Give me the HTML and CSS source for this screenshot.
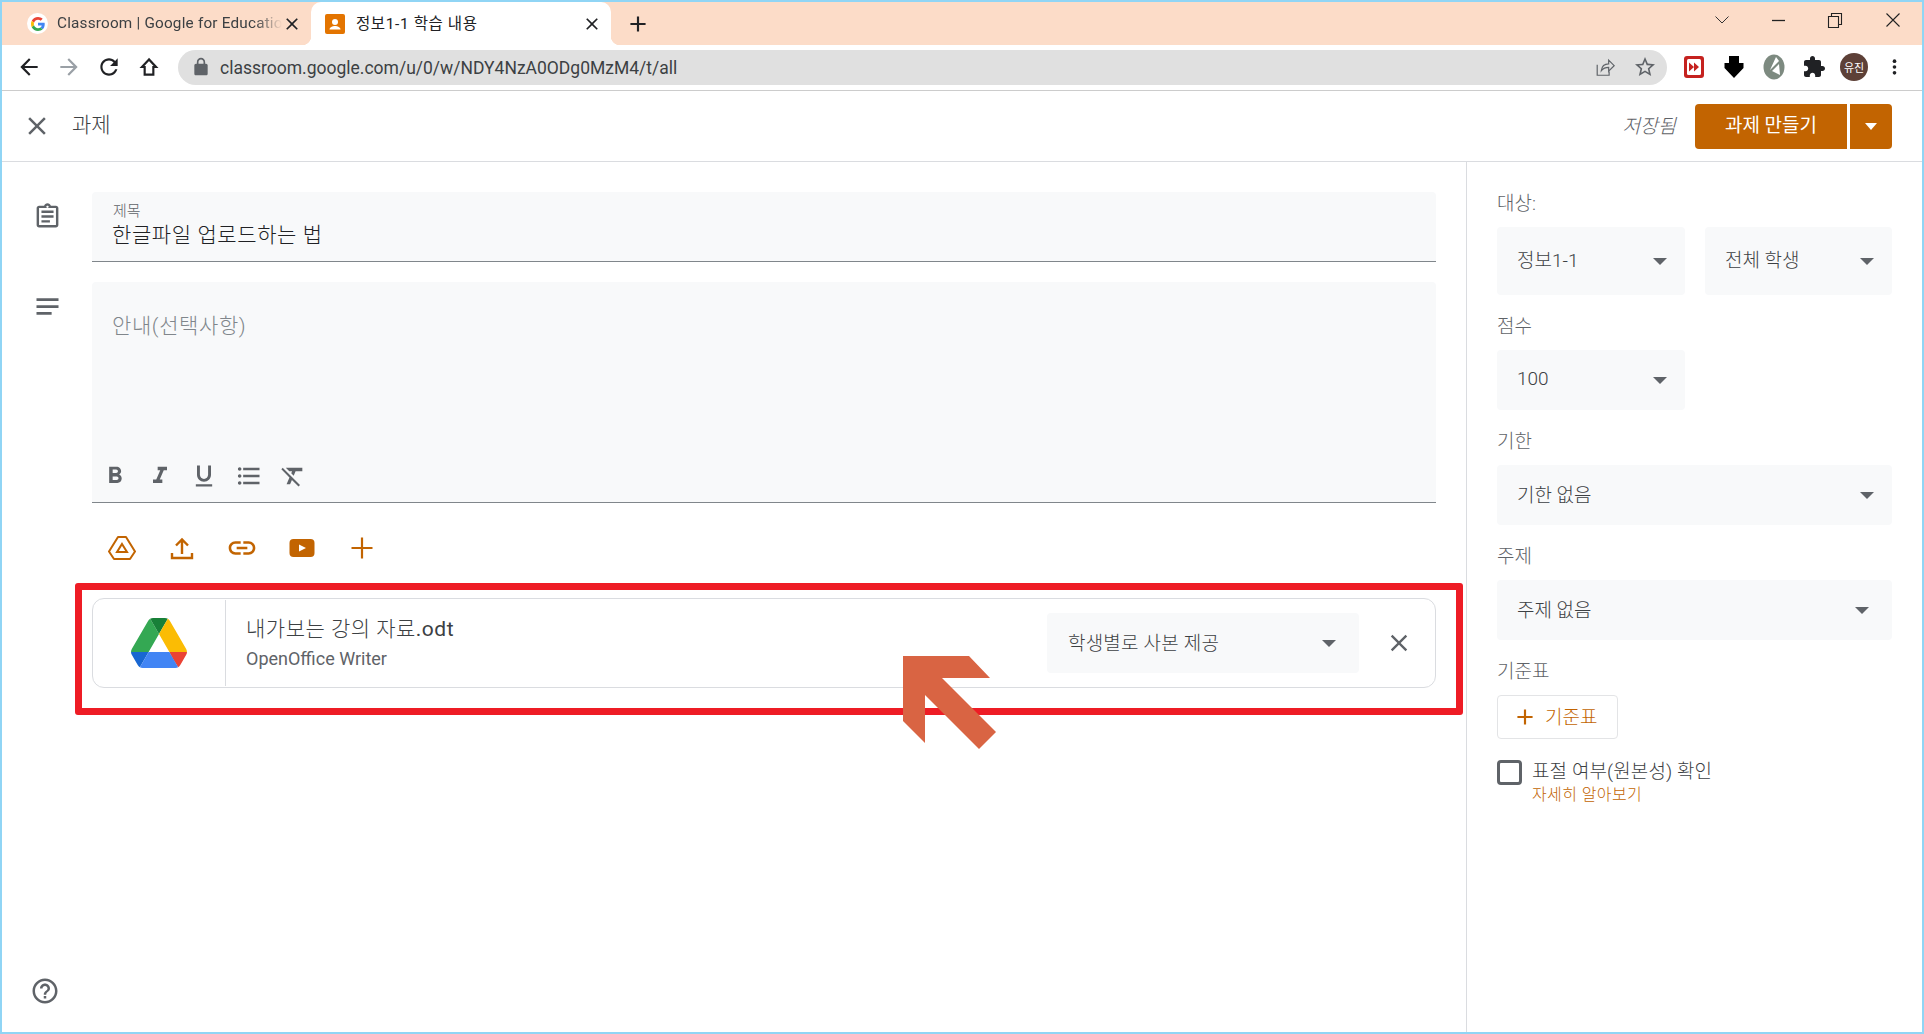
FILE: index.html
```html
<!DOCTYPE html>
<html lang="ko">
<head>
  <meta charset="UTF-8">
  <meta name="viewport" content="width=device-width, initial-scale=1.0">
  <title>과제</title>
  <link rel="stylesheet" href="styles.css">
</head>
<body>
  <svg class="sprite" width="0" height="0">
    <symbol id="i-close" viewBox="0 0 24 24"><path d="M19 6.41L17.59 5 12 10.59 6.41 5 5 6.41 10.59 12 5 17.59 6.41 19 12 13.41 17.59 19 19 17.59 13.41 12z"/></symbol>
    <symbol id="i-plus" viewBox="0 0 24 24"><path d="M19 13h-6v6h-2v-6H5v-2h6V5h2v6h6v2z"/></symbol>
  </svg>

  <div class="window">
    <!-- tab strip -->
    <div class="tabstrip">
      <div class="tab tab-back">
        <span class="favicon-g">
          <svg viewBox="0 0 48 48" width="14" height="14">
            <path fill="#EA4335" d="M24 9.5c3.54 0 6.71 1.22 9.21 3.6l6.85-6.85C35.9 2.38 30.47 0 24 0 14.62 0 6.51 5.38 2.56 13.22l7.98 6.19C12.43 13.72 17.74 9.5 24 9.5z"/>
            <path fill="#4285F4" d="M46.98 24.55c0-1.57-.15-3.09-.38-4.55H24v9.02h12.94c-.58 2.96-2.26 5.48-4.78 7.18l7.73 6c4.51-4.18 7.09-10.36 7.09-17.65z"/>
            <path fill="#FBBC05" d="M10.53 28.59c-.48-1.45-.76-2.99-.76-4.59s.27-3.14.76-4.59l-7.98-6.19C.92 16.46 0 20.12 0 24c0 3.88.92 7.54 2.56 10.78l7.97-6.19z"/>
            <path fill="#34A853" d="M24 48c6.48 0 11.93-2.13 15.89-5.81l-7.73-6c-2.15 1.45-4.92 2.3-8.16 2.3-6.26 0-11.57-4.22-13.47-9.91l-7.98 6.19C6.51 42.62 14.62 48 24 48z"/>
          </svg>
        </span>
        <span class="tab-title tab-title-fade">Classroom | Google for Education</span>
        <svg class="tab-x"><use href="#i-close"/></svg>
      </div>
      <div class="tab tab-active">
        <svg class="favicon-cl" viewBox="0 0 20 20" width="20" height="20">
          <rect width="20" height="20" rx="2" fill="#e37400"/>
          <circle cx="10" cy="8" r="3" fill="#fff"/>
          <path d="M4.5 15.5c0-2.4 3-3.6 5.500-3.600s5.500 1.200 5.500 3.600z" fill="#fff"/>
        </svg>
        <span class="tab-title">정보1-1 학습 내용</span>
        <svg class="tab-x"><use href="#i-close"/></svg>
      </div>
      <svg class="new-tab"><use href="#i-plus"/></svg>
      <div class="window-btns">
        <svg width="16" height="10" viewBox="0 0 16 10"><path d="M1.500 1.500L8 8l6.500-6.500" fill="none" stroke="#333" stroke-width="1"/></svg>
        <svg width="16" height="16" viewBox="0 0 16 16"><path d="M2 8.500h13" stroke="#222" stroke-width="1.300"/></svg>
        <svg width="16" height="16" viewBox="0 0 16 16"><path d="M1.500 4.500h10v11h-10zM4.500 4.500v-3h10v11h-3" fill="none" stroke="#222" stroke-width="1.100"/></svg>
        <svg width="16" height="16" viewBox="0 0 16 16"><path d="M1.500 1.500l13 13M14.500 1.500l-13 13" stroke="#222" stroke-width="1.100"/></svg>
      </div>
    </div>

    <!-- browser toolbar -->
    <div class="toolbar">
      <svg class="nav-icon" viewBox="0 0 24 24"><path d="M20 11H7.830l5.590-5.590L12 4l-8 8 8 8 1.410-1.410L7.830 13H20v-2z"/></svg>
      <svg class="nav-icon nav-off" viewBox="0 0 24 24"><path d="M4 11h12.170l-5.590-5.590L12 4l8 8-8 8-1.410-1.410L16.170 13H4v-2z"/></svg>
      <svg class="nav-icon" viewBox="0 0 24 24"><path d="M17.650 6.350C16.200 4.900 14.210 4 12 4c-4.420 0-7.990 3.580-7.990 8s3.570 8 7.990 8c3.730 0 6.840-2.550 7.730-6h-2.080c-.82 2.330-3.040 4-5.650 4-3.310 0-6-2.690-6-6s2.690-6 6-6c1.660 0 3.140.69 4.220 1.780L13 11h7V4l-2.350 2.350z"/></svg>
      <svg class="nav-icon" viewBox="0 0 24 24"><path d="M12 5L5.500 12H8v7h8v-7h2.500z" fill="none" stroke="#202124" stroke-width="2"/></svg>
      <div class="omnibox">
        <svg class="lock" viewBox="0 0 24 24"><path d="M18 8h-1V6c0-2.760-2.240-5-5-5S7 3.240 7 6v2H6c-1.100 0-2 .9-2 2v10c0 1.100.9 2 2 2h12c1.100 0 2-.9 2-2V10c0-1.100-.9-2-2-2zM9 6c0-1.660 1.340-3 3-3s3 1.340 3 3v2H9V6z"/></svg>
        <span class="url">classroom.google.com/u/0/w/NDY4NzA0ODg0MzM4/t/all</span>
        <svg class="omni-icon" viewBox="0 0 24 24"><path d="M3.500 9.500v11.500h13v-4M8 16c.5-4.500 3.500-7.500 8-7.500V4.500l6 6-6 6v-4c-3.500 0-6 1-8 3.500z" fill="none" stroke="#5f6368" stroke-width="1.300"/></svg>
        <svg class="omni-icon omni-star" viewBox="0 0 24 24"><path d="M22 9.240l-7.190-.62L12 2 9.190 8.630 2 9.240l5.460 4.730L5.820 21 12 17.270 18.180 21l-1.630-7.030L22 9.240zM12 15.400l-3.760 2.270 1-4.280-3.320-2.880 4.380-.38L12 6.100l1.710 4.040 4.380.38-3.320 2.880 1 4.280L12 15.400z"/></svg>
      </div>
      <div class="ext-icons">
        <svg viewBox="0 0 20 22" width="20" height="22"><rect width="20" height="22" rx="3" fill="#c5221f"/><rect x="3" y="3" width="14" height="16" rx="1.500" fill="#fff"/><path d="M5 6.500l5 4.500-5 4.500zM10 6.500l5 4.500-5 4.500z" fill="#c5221f"/></svg>
        <svg viewBox="0 0 20 24" width="20" height="24"><path d="M5 1h10v7h4.500v5L10 23 .5 13V8H5z" fill="#000"/></svg>
        <svg viewBox="0 0 22 26" width="22" height="26"><ellipse cx="11" cy="13" rx="10.500" ry="12.500" fill="#7d8a80"/><path d="M13 3L7 16l9-9zM9 17l7-7 1 11z" fill="#fff"/></svg>
        <svg viewBox="0 0 24 24" width="24" height="24"><path fill="#202124" d="M20.500 11H19V7c0-1.100-.9-2-2-2h-4V3.500C13 2.120 11.880 1 10.500 1S8 2.120 8 3.500V5H4c-1.100 0-1.990.9-1.990 2v3.800H3.500c1.490 0 2.700 1.210 2.700 2.700s-1.210 2.700-2.700 2.700H2V20c0 1.100.9 2 2 2h3.800v-1.500c0-1.490 1.210-2.700 2.700-2.700 1.490 0 2.700 1.210 2.700 2.700V22H17c1.100 0 2-.9 2-2v-4h1.500c1.380 0 2.500-1.120 2.500-2.500S21.880 11 20.500 11z"/></svg>
        <span class="avatar">유진</span>
        <svg viewBox="0 0 6 20" width="5" height="18"><circle cx="3" cy="3" r="2.200"/><circle cx="3" cy="10" r="2.200"/><circle cx="3" cy="17" r="2.200"/></svg>
      </div>
    </div>

    <!-- app bar -->
    <header class="appbar">
      <svg class="appbar-x"><use href="#i-close"/></svg>
      <span class="appbar-title">과제</span>
      <em class="saved">저장됨</em>
      <div class="create">
        <button class="create-main">과제 만들기</button>
        <button class="create-more"><span class="caret caret-white"></span></button>
      </div>
    </header>

    <div class="content">
      <main class="form">
        <div class="row">
          <svg class="row-icon" viewBox="0 0 24 24"><path d="M19 3h-4.180C14.400 1.840 13.300 1 12 1c-1.300 0-2.400.84-2.820 2H5c-1.100 0-2 .9-2 2v14c0 1.100.9 2 2 2h14c1.100 0 2-.9 2-2V5c0-1.100-.9-2-2-2zm-7 0c.55 0 1 .45 1 1s-.45 1-1 1-1-.45-1-1 .45-1 1-1zm7 16H5V5h14v14zM7 15h7v2H7zm0-4h10v2H7zm0-4h10v2H7z"/></svg>
          <div class="title-field">
            <div class="title-label">제목</div>
            <div class="title-value">한글파일 업로드하는 법</div>
          </div>
        </div>

        <div class="row row-desc">
          <svg class="row-icon row-icon-lines" viewBox="0 0 24 24"><path d="M4 6h16v2H4zm0 5h16v2H4zm0 5h11v2H4z"/></svg>
          <div class="desc-col">
            <div class="desc-field">
              <div class="desc-placeholder">안내(선택사항)</div>
              <div class="format-bar">
                <svg viewBox="0 0 24 24"><path d="M15.600 10.790c.97-.67 1.650-1.770 1.650-2.790 0-2.260-1.750-4-4-4H7v14h7.040c2.090 0 3.710-1.700 3.710-3.790 0-1.520-.86-2.820-2.150-3.420zM10 6.500h3c.83 0 1.500.67 1.500 1.500s-.67 1.500-1.500 1.500h-3v-3zm3.500 9H10v-3h3.500c.83 0 1.500.67 1.500 1.500s-.67 1.500-1.500 1.500z"/></svg>
                <svg viewBox="0 0 24 24"><path d="M10 4v3h2.210l-3.420 8H6v3h8v-3h-2.210l3.420-8H18V4z"/></svg>
                <svg viewBox="0 0 24 24"><path d="M12 17c3.310 0 6-2.690 6-6V3h-2.500v8c0 1.930-1.570 3.500-3.500 3.500S8.500 12.930 8.500 11V3H6v8c0 3.310 2.690 6 6 6zm-7 2v2h14v-2H5z"/></svg>
                <svg viewBox="0 0 24 24"><path d="M4 10.500c-.83 0-1.500.67-1.500 1.500s.67 1.500 1.500 1.500 1.500-.67 1.500-1.500-.67-1.500-1.500-1.500zm0-6c-.83 0-1.500.67-1.500 1.500S3.170 7.500 4 7.500 5.500 6.830 5.500 6 4.830 4.500 4 4.500zm0 12c-.83 0-1.500.68-1.500 1.500s.68 1.500 1.500 1.500 1.500-.68 1.500-1.500-.67-1.500-1.500-1.500zM7 19h14v-2H7v2zm0-6h14v-2H7v2zm0-8v2h14V5H7z"/></svg>
                <svg viewBox="0 0 24 24"><path d="M3.270 5L2 6.270l6.970 6.970L6.500 19h3l1.570-3.660L16.730 21 18 19.730 3.550 5.270 3.270 5zM6 5v.18L8.820 8h2.400l-.72 1.680 2.100 2.100L14.210 8H20V5H6z"/></svg>
              </div>
            </div>

            <div class="attach-bar">
              <svg viewBox="0 0 28 28"><path d="M10 3h8l9 14.500-5 7.500H6l-5-7.500z" fill="none" stroke-width="2" stroke-linejoin="round"/><path d="M14 10l5 8H9z" fill="none" stroke-width="2"/></svg>
              <svg viewBox="0 0 28 28"><path d="M14 20V6M8 11.500L14 5.500l6 6M4 19v5h20v-5" fill="none" stroke-width="2.400"/></svg>
              <svg viewBox="0 0 24 24"><path class="fill" d="M3.900 12c0-1.710 1.390-3.100 3.100-3.100h4V7H7c-2.760 0-5 2.240-5 5s2.240 5 5 5h4v-1.900H7c-1.710 0-3.100-1.390-3.100-3.100zM8 13h8v-2H8v2zm9-6h-4v1.900h4c1.710 0 3.100 1.390 3.100 3.100s-1.390 3.100-3.100 3.100h-4V17h4c2.760 0 5-2.240 5-5s-2.240-5-5-5z"/></svg>
              <svg viewBox="0 0 28 28"><rect class="fill" x="1.500" y="5" width="25" height="18" rx="4"/><path d="M11 10.500l7 3.500-7 3.500z" fill="#fff" stroke="none"/></svg>
              <svg viewBox="0 0 28 28"><path d="M14 3.500v21M3.500 14h21" fill="none" stroke-width="2.200"/></svg>
            </div>

            <div class="attach-card">
              <div class="attach-thumb">
                <svg viewBox="0 0 87.300 78" width="56" height="50">
                  <path d="m6.600 66.850 3.850 6.650c.8 1.400 1.950 2.500 3.300 3.300l13.750-23.800h-27.500c0 1.550.4 3.100 1.200 4.500z" fill="#1967d2"/>
                  <path d="m43.650 25-13.750-23.800c-1.350.8-2.500 1.900-3.300 3.300l-25.400 44a9.060 9.060 0 0 0 -1.200 4.500h27.500z" fill="#34a853"/>
                  <path d="m73.550 76.800c1.350-.8 2.500-1.900 3.300-3.300l1.600-2.750 7.650-13.250c.8-1.400 1.200-2.950 1.200-4.500h-27.502l5.852 11.500z" fill="#ea4335"/>
                  <path d="m43.650 25 13.750-23.800c-1.350-.8-2.900-1.200-4.500-1.200h-18.500c-1.600 0-3.150.45-4.500 1.200z" fill="#188038"/>
                  <path d="m59.800 53h-32.300l-13.750 23.800c1.350.8 2.900 1.200 4.500 1.200h50.800c1.600 0 3.150-.45 4.500-1.200z" fill="#4285f4"/>
                  <path d="m73.400 26.500-12.700-22c-.8-1.400-1.950-2.500-3.300-3.300l-13.750 23.800 16.150 28h27.450c0-1.550-.4-3.100-1.200-4.500z" fill="#fbbc04"/>
                </svg>
              </div>
              <div class="attach-text">
                <div class="attach-name">내가보는 강의 자료<span class="attach-ext">.odt</span></div>
                <div class="attach-type">OpenOffice Writer</div>
              </div>
              <div class="select select-copy"><span>학생별로 사본 제공</span><span class="caret"></span></div>
              <svg class="attach-x"><use href="#i-close"/></svg>
            </div>
          </div>
        </div>

        <svg class="help" viewBox="0 0 24 24"><path d="M11 18h2v-2h-2v2zm1-16C6.480 2 2 6.480 2 12s4.480 10 10 10 10-4.480 10-10S17.520 2 12 2zm0 18c-4.410 0-8-3.590-8-8s3.590-8 8-8 8 3.590 8 8-3.590 8-8 8zm0-14c-2.210 0-4 1.790-4 4h2c0-1.100.9-2 2-2s2 .9 2 2c0 2-3 1.750-3 5h2c0-2.250 3-2.500 3-5 0-2.210-1.790-4-4-4z"/></svg>
      </main>

      <aside class="side">
        <div class="field">
          <div class="field-label">대상:</div>
          <div class="pair">
            <div class="select select-tall"><span>정보1-1</span><span class="caret"></span></div>
            <div class="select select-tall"><span>전체 학생</span><span class="caret"></span></div>
          </div>
        </div>
        <div class="field">
          <div class="field-label">점수</div>
          <div class="pair">
            <div class="select"><span>100</span><span class="caret"></span></div>
            <div></div>
          </div>
        </div>
        <div class="field">
          <div class="field-label">기한</div>
          <div class="select"><span>기한 없음</span><span class="caret"></span></div>
        </div>
        <div class="field">
          <div class="field-label">주제</div>
          <div class="select select-topic"><span>주제 없음</span><span class="caret"></span></div>
        </div>
        <div class="field">
          <div class="field-label">기준표</div>
          <button class="rubric-btn"><svg><use href="#i-plus"/></svg><span>기준표</span></button>
        </div>
        <div class="check-row">
          <span class="checkbox"></span>
          <div>
            <div class="check-label">표절 여부(원본성) 확인</div>
            <div class="check-link">자세히 알아보기</div>
          </div>
        </div>
      </aside>
    </div>

    <!-- screenshot annotations -->
    <div class="mark-box"></div>
    <svg class="mark-arrow" viewBox="0 0 93 93" width="93" height="93"><path d="M0 0h66l21 22H39l54 54-17 17-54-54v48L0 65z"/></svg>
  </div>
</body>
</html>
```

FILE: styles.css
```css
* { box-sizing: border-box; }

body {
  margin: 0;
  background: #fff;
  font-family: Roboto, "Noto Sans CJK KR", sans-serif;
  font-weight: 300;
  color: #3c4043;
}

.sprite { position: absolute; }

.window {
  position: relative;
  width: 1924px;
  height: 1034px;
  border: 2px solid #90d5f5;
  display: flex;
  flex-direction: column;
  overflow: hidden;
}

/* tabs */
.tabstrip {
  display: flex;
  align-items: center;
  height: 43px;
  background: #fcdcc8;
  flex: none;
}
.tab {
  display: flex;
  align-items: center;
  height: 43px;
  font-size: 15.500px;
  font-weight: 400;
  color: #3c4043;
}
.tab-back { width: 309px; padding: 0 9px 0 25px; }
.tab-active {
  position: relative;
  width: 300px;
  padding: 0 9px 0 14px;
  background: #fff;
  border-radius: 10px 10px 0 0;
  color: #202124;
}
.tab-active::before,
.tab-active::after {
  content: "";
  position: absolute;
  bottom: 0;
  width: 9px;
  height: 9px;
}
.tab-active::before { left: -9px; background: radial-gradient(circle at 0 0, transparent 9px, #fff 9.500px); }
.tab-active::after { right: -9px; background: radial-gradient(circle at 100% 0, transparent 9px, #fff 9.500px); }
.favicon-g {
  width: 21px;
  height: 21px;
  border-radius: 50%;
  background: #fff;
  display: flex;
  align-items: center;
  justify-content: center;
  flex: none;
}
.favicon-cl { flex: none; }
.tab-title {
  flex: 1;
  margin: 0 0 4px 11px;
  white-space: nowrap;
  overflow: hidden;
  letter-spacing: .6px;
}
.tab-title-fade {
  font-size: 15.300px;
  letter-spacing: .2px;
  margin-bottom: 2px;
  -webkit-mask-image: linear-gradient(90deg, #000 88%, transparent);
  mask-image: linear-gradient(90deg, #000 88%, transparent);
}
.tab-back .tab-title { margin-left: 9px; }
.tab-x { width: 20px; height: 20px; flex: none; fill: #202124; }
.new-tab { width: 26px; height: 26px; margin-left: 14px; fill: #202124; }
.window-btns {
  margin-left: auto;
  display: flex;
  align-items: center;
  gap: 40px;
  padding: 0 21px 8px 0;
}
.window-btns svg:nth-child(3) { margin-left: 1px; }
.window-btns svg:nth-child(4) { margin-left: 2px; }

/* browser toolbar */
.toolbar {
  display: flex;
  align-items: center;
  height: 46px;
  padding: 0 0 1px 14px;
  border-bottom: 1.500px solid #ccc;
  flex: none;
}
.nav-icon { width: 26px; height: 26px; margin-right: 14px; fill: #202124; flex: none; }
.nav-off { fill: #9aa0a6; }
.omnibox {
  display: flex;
  align-items: center;
  width: 1489px;
  height: 35px;
  margin-left: 2px;
  padding: 0 10px 0 13px;
  border-radius: 18px;
  background: #e0e0e0;
}
.lock { width: 20px; height: 20px; fill: #5f6368; }
.url {
  flex: 1;
  margin: 2px 0 0 9px;
  font-size: 17.500px;
  font-weight: 400;
  color: #3c4043;
}
.omni-icon { width: 22px; height: 22px; fill: #5f6368; }
.omni-star { width: 24px; height: 24px; margin-left: 17px; }
.ext-icons {
  display: grid;
  grid-template-columns: repeat(6, 40px);
  align-items: center;
  justify-items: center;
  margin-left: 7px;
  fill: #202124;
}
.avatar {
  width: 28px;
  height: 28px;
  border-radius: 50%;
  background: #5d4037;
  color: #fff;
  font-size: 11px;
  font-weight: 400;
  display: flex;
  align-items: center;
  justify-content: center;
}

/* app bar */
.appbar {
  display: flex;
  align-items: center;
  height: 71px;
  padding: 0 30px 0 20px;
  border-bottom: 1px solid #dadce0;
  flex: none;
}
.appbar-x { width: 30px; height: 30px; fill: #5f6368; }
.appbar-title { margin: 0 0 6px 20px; font-size: 21px; color: #3c4043; }
.saved { margin: 0 0 4px auto; font-size: 19.500px; color: #5f6368; }
.create { display: flex; gap: 3px; margin-left: 19px; }
.create button {
  height: 45px;
  border: 0;
  background: #c26401;
  color: #fff;
  font-family: inherit;
  font-size: 19px;
  font-weight: 400;
  padding: 0 0 6px;
}
.create-main { width: 152px; border-radius: 4px 0 0 4px; }
.create-more { width: 42px; border-radius: 0 4px 4px 0; }
.create .create-more { padding: 0; display: flex; align-items: center; justify-content: center; }

.caret {
  display: inline-block;
  width: 0;
  height: 0;
  border-left: 7px solid transparent;
  border-right: 7px solid transparent;
  border-top: 7px solid #5f6368;
  flex: none;
}
.caret-white { border-left-width: 6px; border-right-width: 6px; border-top-color: #fff; }

/* form */
.content { flex: 1; display: flex; min-height: 0; }
.form {
  position: relative;
  width: 1465px;
  padding: 30px 30px 0 0;
}
.row { display: flex; }
.row-icon {
  width: 29px;
  height: 29px;
  margin: 10px 0 0 31px;
  fill: #5f6368;
  flex: none;
}
.row-icon-lines { width: 33px; height: 33px; margin: 8px 0 0 29px; }
.row-desc { margin-top: 20px; }
.title-field {
  flex: 1;
  margin-left: 30px;
  height: 70px;
  padding: 9px 21px 0 20px;
  background: #f8f9fa;
  border-bottom: 1px solid #80868b;
  border-radius: 4px 4px 0 0;
}
.row-desc .desc-col { margin-left: 28px; }
.title-label { font-size: 15px; line-height: 20px; padding-left: 1px; color: #5f6368; }
.title-value { font-size: 21px; line-height: 28px; letter-spacing: .6px; color: #202124; }
.desc-col { flex: 1; }
.desc-field {
  display: flex;
  flex-direction: column;
  height: 221px;
  padding: 30px 21px 0 20px;
  background: #f8f9fa;
  border-bottom: 1px solid #80868b;
  border-radius: 4px 4px 0 0;
}
.desc-placeholder { font-size: 21px; line-height: 28px; letter-spacing: .6px; color: #80868b; }
.format-bar {
  display: flex;
  gap: 16.500px;
  margin: auto 0 12px -11px;
}
.format-bar svg { width: 28px; height: 28px; fill: #5f6368; }
.attach-bar {
  display: flex;
  align-items: center;
  gap: 32px;
  height: 95px;
  padding: 0 0 5px 16px;
}
.attach-bar svg { width: 28px; height: 28px; stroke: #c26401; fill: none; }
.attach-bar .fill { fill: #c26401; stroke: none; }
.attach-bar svg:nth-child(3) { width: 32px; height: 32px; margin: 0 -2px; }
.attach-card {
  display: flex;
  align-items: center;
  height: 90px;
  border: 1px solid #dadce0;
  border-radius: 12px;
}
.attach-thumb {
  display: flex;
  align-items: center;
  justify-content: center;
  width: 133px;
  height: 86px;
  border-right: 1px solid #dadce0;
  flex: none;
}
.attach-text { flex: 1; margin-left: 20px; }
.attach-name { font-size: 21px; line-height: 30px; letter-spacing: .5px; color: #3c4043; margin-bottom: 2px; }
.attach-ext { font-weight: 400; }
.attach-type { font-size: 18px; font-weight: 400; line-height: 26px; color: #5f6368; }
.select {
  display: flex;
  align-items: center;
  justify-content: space-between;
  height: 60px;
  padding: 0 18px 0 20px;
  background: #f8f9fa;
  border-radius: 4px;
  font-size: 19px;
  color: #3c4043;
}
.select span:first-child { margin-bottom: 3px; }
.select-tall span:first-child { margin-bottom: 5px; }
.select-tall { height: 68px; }
.select-copy { width: 312px; flex: none; padding: 0 23px 0 21px; letter-spacing: .2px; }
.select-topic { padding-right: 23px; }
.attach-x { width: 28px; height: 28px; margin: 0 22px 0 26px; fill: #5f6368; flex: none; }
.help {
  position: absolute;
  left: 28px;
  bottom: 26px;
  width: 30px;
  height: 30px;
  fill: #5f6368;
}

/* right column */
.side {
  flex: 1;
  padding: 29px 30px 0;
  border-left: 1px solid #dadce0;
}
.field { margin-bottom: 19px; }
.field-label { font-size: 19px; line-height: 22px; padding-top: 2px; margin-bottom: 12px; color: #5f6368; }
.pair { display: grid; grid-template-columns: 188px 187px; gap: 20px; }
.rubric-btn {
  display: flex;
  align-items: center;
  width: 121px;
  height: 44px;
  padding: 0 0 0 14px;
  background: #fff;
  border: 1px solid #e3e4e6;
  border-radius: 4px;
  font-family: inherit;
  font-size: 19px;
  font-weight: 300;
  color: #c26401;
}
.rubric-btn span { margin-bottom: 3px; }
.rubric-btn svg { width: 26px; height: 26px; margin-right: 7px; fill: #c26401; }
.check-row { display: flex; gap: 10px; margin-top: 21px; }
.checkbox {
  width: 25px;
  height: 25px;
  border: 3px solid #5f6368;
  border-radius: 4px;
  flex: none;
}
.check-label { font-size: 19px; line-height: 22px; padding-top: 1px; letter-spacing: .1px; color: #3c4043; }
.check-link { font-size: 16px; line-height: 24px; letter-spacing: .4px; color: #c26401; }

/* annotations drawn over the screenshot */
.mark-box {
  position: absolute;
  left: 73px;
  top: 581px;
  width: 1388px;
  height: 132px;
  border: 7px solid #ee1c25;
  border-radius: 3px;
}
.mark-arrow {
  position: absolute;
  left: 901px;
  top: 654px;
  fill: #d96443;
}
```
